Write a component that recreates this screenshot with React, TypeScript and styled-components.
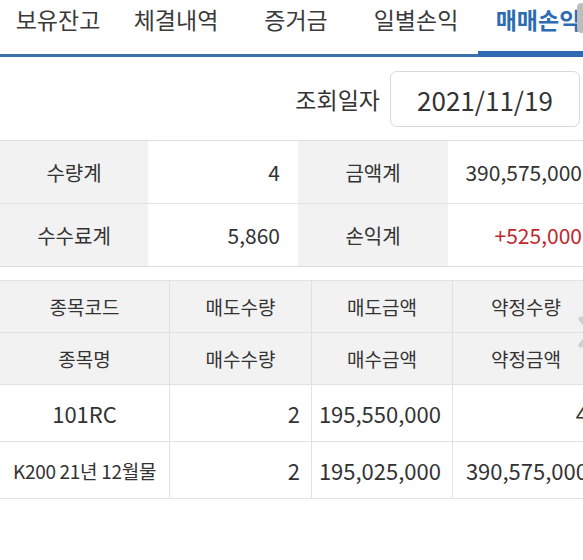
import React from 'react';
import styled, {createGlobalStyle, css} from 'styled-components';

const GlobalStyle = createGlobalStyle`
  html, body {
    margin: 0;
    padding: 0;
    background: #ffffff;
    overflow: hidden;
  }

  body {
    font-family: "Noto Sans CJK KR", "Noto Sans", sans-serif;
    color: #333333;
  }
`;

const Page = styled.div`
  position: relative;
  width: 600px;
  height: 560px;
  overflow: hidden;
`;

// ---------------------------------------------------------------- tabs
const TabBar = styled.div`
  display: grid;
  grid-template-columns: 116px 120px 120px 120px 124px;
  height: 54px;
  border-bottom: 3px solid #3b70ab;
`;

const Tab = styled.div<{ active?: boolean }>`
  position: relative;
  display: flex;
  justify-content: center;
  padding-top: 2px;
  font-size: 23px;
  line-height: 34px;
  color: #3a3a3a;

  ${({active}) => active && css`
    color: #2d6bb2;
    font-weight: 700;

    &::after {
      content: "";
      position: absolute;
      left: 2px;
      right: 0;
      bottom: -3px;
      height: 6px;
      background: #2d6bb2;
    }
  `}
`;

const ScrollThumb = styled.div`
  position: absolute;
  top: 3px;
  left: 577px;
  width: 9px;
  height: 30px;
  border-radius: 5px;
  background: #bdbdbd;
`;

// ---------------------------------------------------------------- search date
const DateRow = styled.div`
  display: flex;
  justify-content: flex-end;
  align-items: center;
  gap: 10px;
  padding: 14px 20px 13px 0;
`;

const DateLabel = styled.span`
  font-size: 23px;
  color: #333;
`;

const DateBox = styled.div`
  width: 188px;
  height: 54px;
  border: 1px solid #d9d9d9;
  border-radius: 7px;
  display: flex;
  align-items: center;
  justify-content: center;
  font-size: 26px;
  color: #333;
`;

// ---------------------------------------------------------------- summary
const Summary = styled.div`
  display: grid;
  grid-template-columns: 148px 150px 150px 1fr;
  border-top: 1px solid #dcdcdc;
  border-bottom: 1px solid #dcdcdc;
`;

const SumCell = styled.div<{ head?: boolean; last?: boolean; tone?: 'up' }>`
  height: 62px;
  display: flex;
  align-items: center;
  font-size: ${({head}) => (head ? 20 : 21)}px;
  justify-content: ${({head}) => (head ? 'center' : 'flex-end')};
  padding-right: ${({head}) => (head ? 0 : 18)}px;
  background: ${({head}) => (head ? '#f2f2f2' : '#ffffff')};
  color: ${({tone}) => (tone === 'up' ? '#c1272d' : '#333')};
  border-bottom: ${({last}) => (last ? 'none' : '1px solid #e3e3e3')};
`;

// ---------------------------------------------------------------- list grid
const ListGrid = styled.div`
  margin-top: 13px;
  display: grid;
  grid-template-columns: 170px 142px 141px 147px;
  border-top: 1px solid #e3e3e3;
`;

const HeadCell = styled.div`
  height: 51px;
  display: flex;
  align-items: center;
  justify-content: center;
  font-size: 19px;
  background: #f2f2f2;
  border-right: 1px solid #e0e0e0;
  border-bottom: 1px solid #e0e0e0;
`;

const DataCell = styled.div<{ align?: 'center' | 'right'; small?: boolean }>`
  height: 56px;
  display: flex;
  align-items: center;
  justify-content: ${({align}) => (align === 'center' ? 'center' : 'flex-end')};
  padding-right: ${({align}) => (align === 'center' ? 0 : 11)}px;
  font-size: ${({small}) => (small ? 19 : 22)}px;
  letter-spacing: ${({small}) => (small ? '-0.3px' : '0')};
  white-space: nowrap;
  color: #333;
  background: #fff;
  border-right: 1px solid #e3e3e3;
  border-bottom: 1px solid #e3e3e3;
`;

const MoreArrow = styled.svg`
  position: absolute;
  top: 316px;
  left: 577px;
`;

const tabs = ['보유잔고', '체결내역', '증거금', '일별손익', '매매손익'];

const headRows = [
    ['종목코드', '매도수량', '매도금액', '약정수량'],
    ['종목명', '매수수량', '매수금액', '약정금액'],
];

const rows = [
    {code: '101RC', qty: '2', amt: '195,550,000', last: '4', small: false},
    {code: 'K200 21년 12월물', qty: '2', amt: '195,025,000', last: '390,575,000', small: true},
];

export default function App() {
    return (
        <Page>
            <GlobalStyle/>
            <TabBar>
                {tabs.map((t, i) => (
                    <Tab key={t} active={i === tabs.length - 1}>{t}</Tab>
                ))}
            </TabBar>
            <ScrollThumb/>

            <DateRow>
                <DateLabel>조회일자</DateLabel>
                <DateBox>2021/11/19</DateBox>
            </DateRow>

            <Summary>
                <SumCell head>수량계</SumCell>
                <SumCell>4</SumCell>
                <SumCell head>금액계</SumCell>
                <SumCell>390,575,000</SumCell>
                <SumCell head last>수수료계</SumCell>
                <SumCell last>5,860</SumCell>
                <SumCell head last>손익계</SumCell>
                <SumCell last tone="up">+525,000</SumCell>
            </Summary>

            <ListGrid>
                {headRows.map(r => r.map(h => <HeadCell key={h}>{h}</HeadCell>))}
                {rows.map(r => (
                    <React.Fragment key={r.code}>
                        <DataCell align="center" small={r.small}>{r.code}</DataCell>
                        <DataCell>{r.qty}</DataCell>
                        <DataCell>{r.amt}</DataCell>
                        <DataCell>{r.last}</DataCell>
                    </React.Fragment>
                ))}
            </ListGrid>

            <MoreArrow width="20" height="32" viewBox="0 0 20 32">
                <path d="M4 3 L15 16 L4 29" fill="none" stroke="#cfcfcf" strokeWidth="5" strokeLinecap="round"
                      strokeLinejoin="round"/>
            </MoreArrow>
        </Page>
    );
}
